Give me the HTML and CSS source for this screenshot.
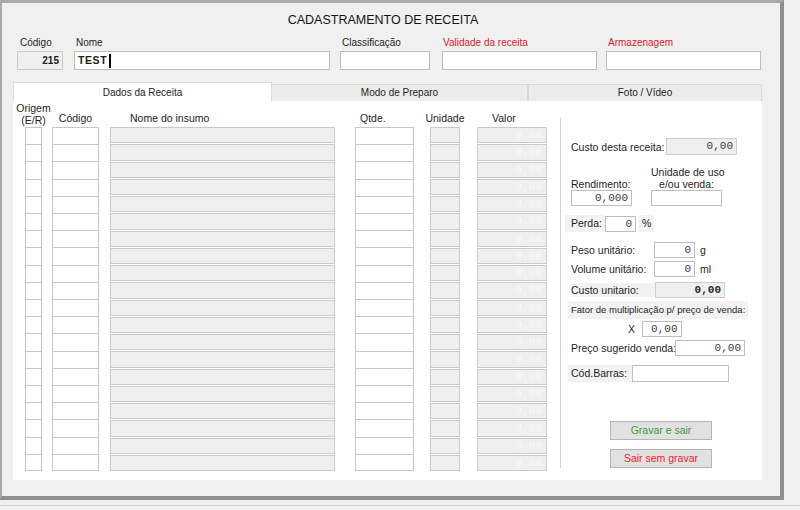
FILE: index.html
```html
<!DOCTYPE html>
<html lang="pt-BR">
<head>
<meta charset="utf-8">
<title>Cadastramento de Receita</title>
<link rel="stylesheet" href="styles.css">
</head>
<body>
<div class="window">
  <div class="title">CADASTRAMENTO DE RECEITA</div>
  <div class="fields">
    <div class="field f-codigo"><label>Código</label><div class="inp ro num-b">215</div></div>
    <div class="field f-nome"><label>Nome</label><div class="inp txt-b">TEST<span class="caret"></span></div></div>
    <div class="field f-class"><label>Classificação</label><div class="inp"></div></div>
    <div class="field f-valid"><label class="red">Validade da receita</label><div class="inp"></div></div>
    <div class="field f-armaz"><label class="red">Armazenagem</label><div class="inp"></div></div>
  </div>
  <div class="tabs">
    <div class="tab active">Dados da Receita</div>
    <div class="tab t2">Modo de Preparo</div>
    <div class="tab t3">Foto / Vídeo</div>
  </div>
  <div class="panel">
    <div class="table">
      <div class="col c-orig">
        <div class="head">Origem<br>(E/R)</div>
        <div class="cells white"><i></i><i></i><i></i><i></i><i></i><i></i><i></i><i></i><i></i><i></i><i></i><i></i><i></i><i></i><i></i><i></i><i></i><i></i><i></i><i></i></div>
      </div>
      <div class="col c-cod">
        <div class="head">Código</div>
        <div class="cells white"><i></i><i></i><i></i><i></i><i></i><i></i><i></i><i></i><i></i><i></i><i></i><i></i><i></i><i></i><i></i><i></i><i></i><i></i><i></i><i></i></div>
      </div>
      <div class="col c-nome">
        <div class="head">Nome do insumo</div>
        <div class="cells gray"><i></i><i></i><i></i><i></i><i></i><i></i><i></i><i></i><i></i><i></i><i></i><i></i><i></i><i></i><i></i><i></i><i></i><i></i><i></i><i></i></div>
      </div>
      <div class="col c-qtde">
        <div class="head">Qtde.</div>
        <div class="cells white"><i></i><i></i><i></i><i></i><i></i><i></i><i></i><i></i><i></i><i></i><i></i><i></i><i></i><i></i><i></i><i></i><i></i><i></i><i></i><i></i></div>
      </div>
      <div class="col c-unid">
        <div class="head">Unidade</div>
        <div class="cells gray"><i></i><i></i><i></i><i></i><i></i><i></i><i></i><i></i><i></i><i></i><i></i><i></i><i></i><i></i><i></i><i></i><i></i><i></i><i></i><i></i></div>
      </div>
      <div class="col c-valor">
        <div class="head">Valor</div>
        <div class="cells gray faint"><i>0,00</i><i>0,00</i><i>0,00</i><i>0,00</i><i>0,00</i><i>0,00</i><i>0,00</i><i>0,00</i><i>0,00</i><i>0,00</i><i>0,00</i><i>0,00</i><i>0,00</i><i>0,00</i><i>0,00</i><i>0,00</i><i>0,00</i><i>0,00</i><i>0,00</i><i>0,00</i></div>
      </div>
    </div>
    <div class="side">
      <div class="row r-custo"><span class="lb w-custo">Custo desta receita:</span><div class="box ro num w71">0,00</div></div>
      <div class="r-rend">
        <span class="lb rend-l">Rendimento:</span>
        <span class="lb unid-l">Unidade de uso<br>e/ou venda:</span>
        <div class="box num">0,000</div>
        <div class="box"></div>
      </div>
      <div class="row r-perda"><span class="lb lbg w-perda">Perda:</span><div class="box num w31">0</div><span class="unit lbg pct">%</span></div>
      <div class="row r-peso"><span class="lb w-peso">Peso unitário:</span><div class="box num w41">0</div><span class="unit">g</span></div>
      <div class="row r-vol"><span class="lb w-peso">Volume unitário:</span><div class="box num w41">0</div><span class="unit">ml</span></div>
      <div class="row r-cu"><span class="lb lbg w-cu">Custo unitario:</span><div class="box ro num num-bold w70">0,00</div></div>
      <div class="fator lbg">Fator de multiplicação p/ preço de venda:</div>
      <div class="row r-x"><span class="lb x-l">X</span><div class="box num w40">0,00</div></div>
      <div class="row r-preco"><span class="lb w-preco">Preço sugerido venda:</span><div class="box num w70">0,00</div></div>
      <div class="row r-barras"><span class="lb lbg w-barras">Cód.Barras:</span><div class="box w97"></div></div>
      <div class="btn green">Gravar e sair</div>
      <div class="btn red-btn">Sair sem gravar</div>
    </div>
  </div>
</div>
<div class="below"></div>
</body>
</html>
```

FILE: styles.css
```css
* { box-sizing: border-box; margin: 0; padding: 0; }
html, body { width: 800px; height: 510px; overflow: hidden; }
body {
  background: #f0f0f0;
  font-family: "Liberation Sans", Arial, sans-serif;
  font-size: 10px;
  color: #1e1e1e;
}
.window {
  width: 784px;
  height: 500px;
  background: #f0f0f0;
  border-top: 3px solid #a9a9a9;
  border-left: 2px solid #a9a9a9;
  border-right: 4px solid #8f8f8f;
  border-bottom: 4px solid #8f8f8f;
}
.below { height: 1px; background: #cfcfcf; margin-top: 5px; }

.title {
  height: 25px;
  padding-top: 9px;
  padding-right: 16px;
  line-height: 16px;
  font-size: 12.5px;
  text-align: center;
  color: #141414;
}

.fields { display: flex; margin-top: 9px; }
.field { display: flex; flex-direction: column; }
.field label { height: 12px; line-height: 12px; margin-bottom: 2px; padding-left: 3px; white-space: nowrap; }
.field label.red { color: #c8262d; }
.inp { height: 19px; background: #fff; border: 1px solid #bdbdbd; line-height: 17px; padding: 0 3px; }
.inp.ro { background: #efefef; border-color: #c9c9c9; }
.num-b { font-weight: bold; text-align: right; font-size: 10px; }
.txt-b { font-weight: bold; font-size: 10.5px; letter-spacing: 0.6px; display: flex; align-items: center; }
.caret { display: inline-block; width: 1.5px; height: 14px; background: #000; margin-left: 2px; }
.f-codigo { margin-left: 15px; width: 46px; }
.f-nome { margin-left: 11px; width: 256px; }
.f-nome label { padding-left: 2px; }
.f-class { margin-left: 10px; width: 90px; }
.f-class label { padding-left: 2px; }
.f-valid { margin-left: 12px; width: 155px; }
.f-valid label { padding-left: 1px; }
.f-armaz { margin-left: 9px; width: 155px; }
.f-armaz label { padding-left: 2px; }

.tabs { display: flex; align-items: flex-end; height: 19px; margin-top: 12px; margin-left: 11px; }
.tab {
  height: 17px;
  line-height: 16px;
  text-align: center;
  background: #ececec;
  border: 1px solid #d8d8d8;
  border-bottom: none;
}
.tab.active { width: 259px; height: 19px; padding-top: 2px; background: #fff; border-color: #dcdcdc; }
.t2 { width: 256px; border-left: none; }
.t3 { width: 234px; border-left: 1px solid #d8d8d8; }

.panel {
  display: flex;
  width: 749px;
  height: 379px;
  margin-left: 11px;
  background: #fff;
}

.table { display: flex; padding-left: 12px; }
.col { display: flex; flex-direction: column; }
.head {
  height: 26px;
  display: flex;
  align-items: flex-end;
  justify-content: center;
  padding-bottom: 3px;
  line-height: 12px;
  white-space: nowrap;
  text-align: center;
  font-size: 10.5px;
}
.c-orig { width: 17px; }
.c-orig .head { padding-bottom: 1px; }
.c-cod { width: 47px; margin-left: 10px; }
.c-nome { width: 225px; margin-left: 11px; }
.c-nome .head { justify-content: flex-start; padding-left: 20px; }
.c-qtde { width: 59px; margin-left: 20px; }
.c-qtde .head { justify-content: flex-start; padding-left: 5px; }
.c-unid { width: 30px; margin-left: 16px; }
.c-valor { width: 70px; margin-left: 17px; }
.c-valor .head { justify-content: flex-start; padding-left: 15px; }

.cells { display: grid; grid-template-rows: repeat(20, 1fr); height: 344px; }
.cells i { display: block; font-style: normal; }
.white i { background: #fff; border: 1px solid #c6c6c6; border-bottom: none; }
.white i:last-child { border-bottom: 1px solid #c6c6c6; }
.gray { row-gap: 1px; }
.gray i { background: #efefef; border: 1px solid #cacaca; }
.faint i {
  font-family: "Liberation Mono", monospace;
  font-size: 11px;
  line-height: 14px;
  text-align: right;
  padding-right: 4px;
  color: #f9f9f9;
}

.side {
  display: flex;
  flex-direction: column;
  height: 350px;
  margin-left: 13px;
  margin-top: 17px;
  padding-left: 10px;
  border-left: 1px solid #d2d2d2;
  font-size: 10.5px;
}
.row { display: flex; align-items: center; }
.lb { white-space: nowrap; line-height: 12px; }
.lbg { background: #f2f2f2; }
.box {
  height: 16px;
  background: #fff;
  border: 1px solid #bebebe;
  padding-right: 3px;
}
.box.ro { background: #efefef; border-color: #cdcdcd; }
.num {
  font-family: "Liberation Mono", monospace;
  font-size: 11px;
  line-height: 14px;
  text-align: right;
  color: #3c3c3c;
}
.num-bold { font-weight: bold; color: #2a2a2a; }
.w31 { width: 31px; }
.w40 { width: 40px; }
.w41 { width: 41px; }
.w70 { width: 70px; }
.w71 { width: 71px; }
.w97 { width: 97px; }

.r-custo { margin-top: 20px; height: 17px; }
.r-custo .box { height: 17px; line-height: 15px; }
.w-custo { width: 95px; }

.r-rend {
  display: grid;
  grid-template-columns: 61px 71px;
  grid-template-rows: auto 16px;
  column-gap: 19px;
  margin-top: 11px;
}
.rend-l { align-self: end; }
.unid-l { text-align: center; }

.r-perda { margin-top: 9px; height: 17px; }
.w-perda { width: 40px; height: 17px; line-height: 17px; margin-left: -6px; padding-left: 6px; }
.unit { margin-left: 5px; line-height: 12px; }
.pct { height: 17px; line-height: 17px; padding: 0 3px; margin-left: 3px; }

.r-peso { margin-top: 10px; height: 16px; }
.r-vol { margin-top: 3px; height: 16px; }
.w-peso { width: 83px; }

.r-cu { margin-top: 5px; height: 16px; }
.w-cu { width: 84px; height: 14px; line-height: 14px; }

.fator {
  margin-top: 3px;
  height: 18px;
  line-height: 18px;
  width: 180px;
  margin-left: -3px;
  padding-left: 3px;
  font-size: 9.5px;
  white-space: nowrap;
}
.r-x { margin-top: 2px; height: 16px; }
.x-l { margin-left: 57px; width: 13.5px; }

.r-preco { margin-top: 3px; height: 16px; }
.w-preco { width: 104px; }

.r-barras { margin-top: 9px; height: 17px; }
.r-barras .box { height: 17px; }
.w-barras { width: 64px; height: 17px; line-height: 17px; margin-left: -3px; padding-left: 3px; }

.btn {
  width: 102px;
  height: 19px;
  margin-left: 39px;
  background: #e1e1e1;
  border: 1px solid #b4b4b4;
  text-align: center;
  line-height: 17px;
  font-size: 10.5px;
}
.green { margin-top: 39px; color: #3a9a3e; }
.red-btn { margin-top: 9px; color: #e1262c; }
```
